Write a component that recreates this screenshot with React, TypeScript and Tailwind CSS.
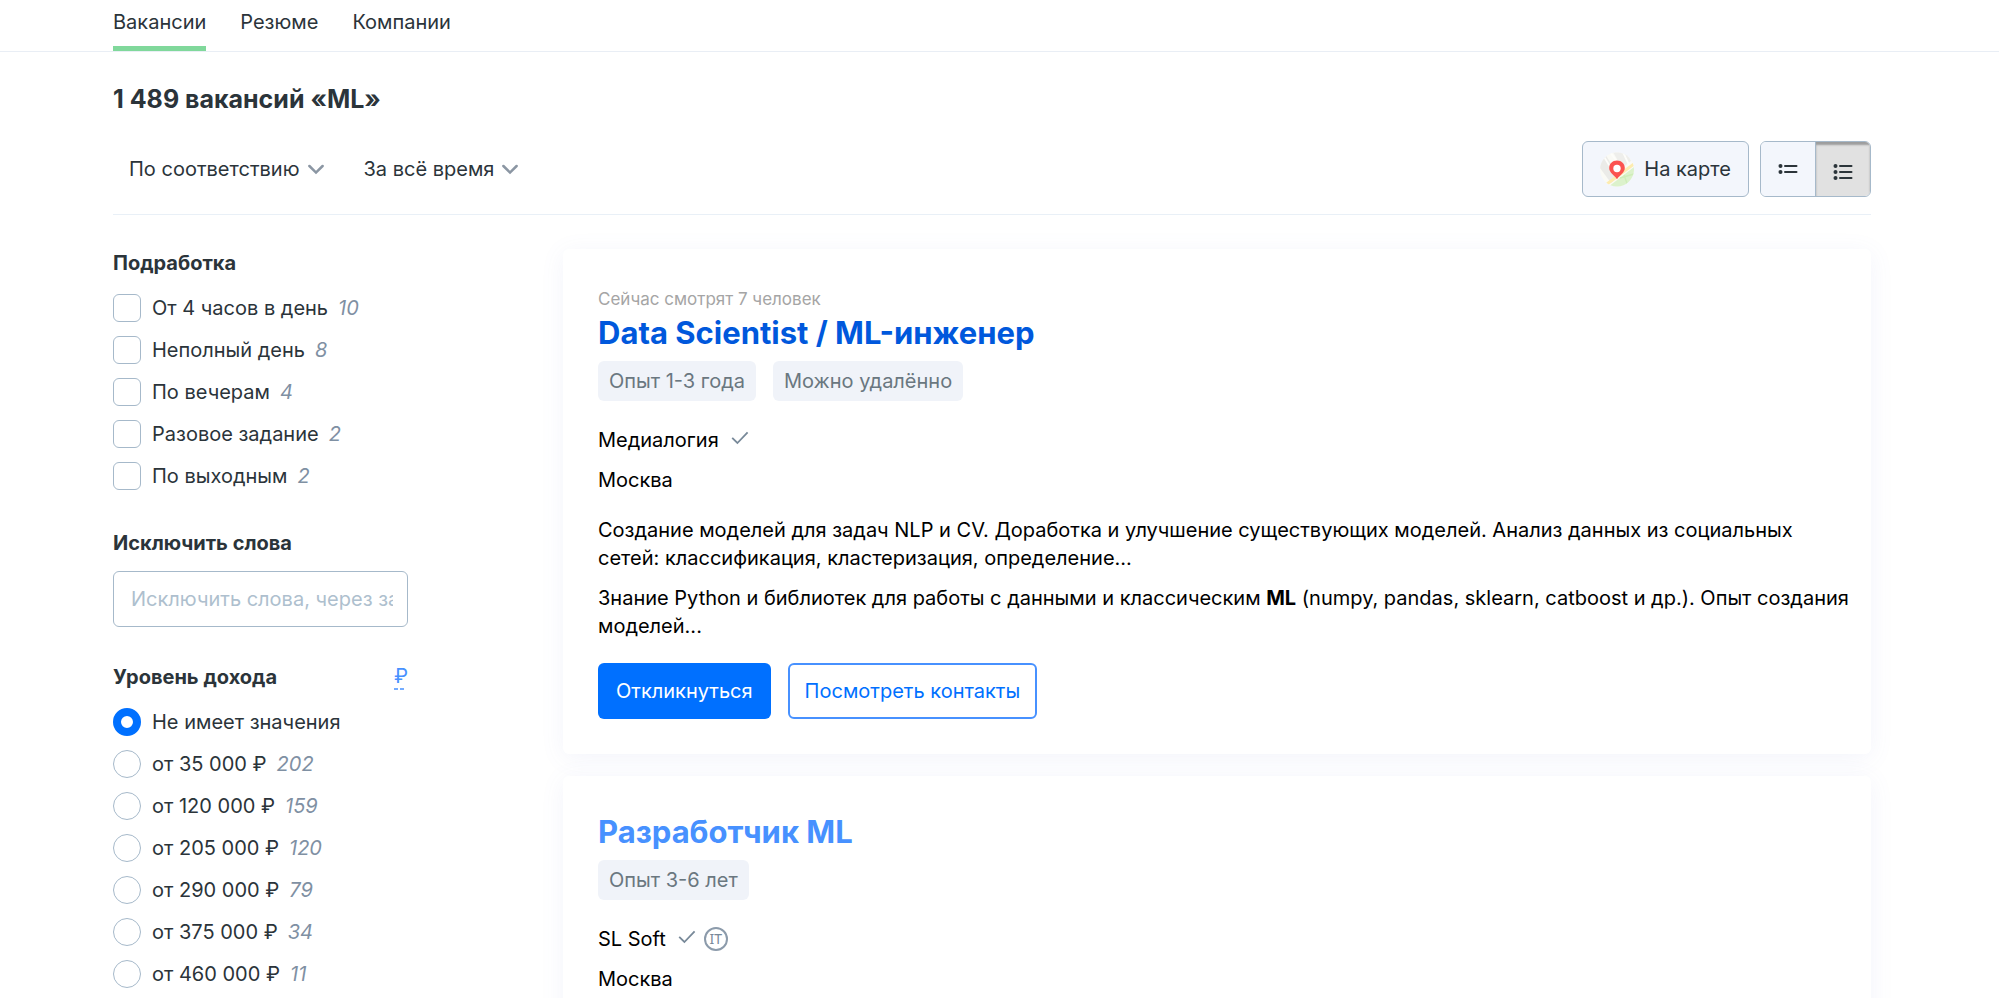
import React from "react";

type Option = { label: string; count?: number };

const schedule: Option[] = [
  { label: "От 4 часов в день", count: 10 },
  { label: "Неполный день", count: 8 },
  { label: "По вечерам", count: 4 },
  { label: "Разовое задание", count: 2 },
  { label: "По выходным", count: 2 },
];

const income: Option[] = [
  { label: "Не имеет значения" },
  { label: "от 35 000 ₽", count: 202 },
  { label: "от 120 000 ₽", count: 159 },
  { label: "от 205 000 ₽", count: 120 },
  { label: "от 290 000 ₽", count: 79 },
  { label: "от 375 000 ₽", count: 34 },
  { label: "от 460 000 ₽", count: 11 },
];

function Chevron() {
  return (
    <svg width="16" height="12" viewBox="0 0 16 12" fill="none" aria-hidden="true">
      <path d="M1.4 3L8 9.6L14.6 3" stroke="#8b96a3" strokeWidth="2.5" strokeLinecap="round" />
    </svg>
  );
}

function Check() {
  return (
    <svg width="18" height="14" viewBox="0 0 18 14" fill="none" className="mb-1" aria-hidden="true">
      <path d="M1.2 6.8L6.4 12L16.6 1.4" stroke="#788999" strokeWidth="1.8" />
    </svg>
  );
}

function MapIcon() {
  return (
    <svg width="34" height="35" viewBox="0 0 34 35" aria-hidden="true">
      <defs>
        <clipPath id="disc">
          <circle cx="17" cy="17.5" r="17" />
        </clipPath>
      </defs>
      <g clipPath="url(#disc)">
        <rect width="34" height="35" fill="#fafaf5" />
        <path d="M0 7L5 2L19 24L11 31L0 16Z" fill="#ebebe8" />
        <path d="M13 0H27L31 9L22 16Z" fill="#eeeeeb" />
        <path d="M3 3L20 31M10 0L23 18M23 0L29 13" stroke="#fdfdfa" strokeWidth="1.8" />
        <path d="M8 35L34 15V35Z" fill="#dcf2cc" />
        <path d="M20 26L34 22M24 23L28 34" stroke="#cfedb9" strokeWidth="1.4" />
        <path d="M7 32L34 12" stroke="#fdecb0" strokeWidth="3" />
      </g>
      <path
        d="M17 8.5C12.5 8.5 9.2 11.8 9.2 16.1C9.2 20.7 14 23 17 27.2C20 23 24.8 20.7 24.8 16.1C24.8 11.8 21.5 8.5 17 8.5Z"
        fill="#fb524f"
      />
      <circle cx="17" cy="16.5" r="3.7" fill="#fff" />
    </svg>
  );
}

function ListIcon({ rows }: { rows: number[] }) {
  return (
    <svg width="20" height="17" viewBox="0 0 20 17" aria-hidden="true">
      {rows.map((y) => (
        <g key={y}>
          <circle cx="2.5" cy={y} r="2" fill="#2b343a" />
          <path d={`M7 ${y}H18.5`} stroke="#2b343a" strokeWidth="2" strokeLinecap="round" />
        </g>
      ))}
    </svg>
  );
}

function OptionList({ type, options }: { type: "checkbox" | "radio"; options: Option[] }) {
  return (
    <div className="mt-2.5">
      {options.map((o, i) => (
        <label key={o.label} className="flex h-[42px] items-center">
          <input
            type={type}
            name={type === "radio" ? "income" : undefined}
            defaultChecked={type === "radio" && i === 0}
            className={
              type === "radio"
                ? "size-7 shrink-0 appearance-none rounded-full border border-[#a6b9ca] bg-white checked:border-8 checked:border-[#0070ff]"
                : "size-7 shrink-0 appearance-none rounded-md border border-[#a6b9ca] bg-white checked:bg-[#0070ff]"
            }
          />
          <span className="ml-[11px]">{o.label}</span>
          {o.count !== undefined && <i className="ml-2.5 text-[#7f90a3]">{o.count}</i>}
        </label>
      ))}
    </div>
  );
}

function Tag({ children }: { children: React.ReactNode }) {
  return (
    <li className="flex h-10 items-center rounded-md bg-[#f0f3f9] px-[11px] text-[#6a7780]">{children}</li>
  );
}

const card = "rounded-md bg-white pt-9 pr-5 pb-[35px] pl-[35px] text-black shadow-[0_4px_24px_rgba(100,120,200,0.08)]";

export default function App() {
  return (
    <div className="h-screen overflow-hidden bg-white font-['Inter','Liberation_Sans',sans-serif] text-xl leading-7 text-[#2b343a]">
      <nav className="flex gap-[34px] border-b border-[#e9eef5] pr-32 pl-[113px]">
        <a href="#vacancies" className="border-b-5 border-[#80d89b] pt-2 pb-2.5">Вакансии</a>
        <a href="#resumes" className="pt-2">Резюме</a>
        <a href="#companies" className="pt-2">Компании</a>
      </nav>

      <main className="pr-32 pl-[113px]">
        <h1 className="mt-[31px] text-[25px] leading-8 font-bold">1 489 вакансий «ML»</h1>

        <div className="mt-[26px] flex items-center border-b border-[#e9f0f7] pb-[17px]">
          <button type="button" className="ml-4 flex items-center gap-2">
            По соответствию
            <Chevron />
          </button>
          <button type="button" className="ml-10 flex items-center gap-2">
            За всё время
            <Chevron />
          </button>
          <button
            type="button"
            className="ml-auto flex h-14 items-center gap-2.5 rounded-md border border-[#a6b9ca] bg-[#f3f6fc] px-[17px]"
          >
            <MapIcon />
            На карте
          </button>
          <div className="ml-[11px] flex h-14 overflow-hidden rounded-md border border-[#a6b9ca]">
            <button
              type="button"
              aria-label="Кратко"
              className="flex w-[55px] items-center justify-center border-r border-[#a6b9ca] bg-[#f3f6fc]"
            >
              <ListIcon rows={[5, 11]} />
            </button>
            <button
              type="button"
              aria-label="Подробно"
              aria-pressed="true"
              className="flex w-[54px] items-center justify-center bg-[#e1e1e1] pt-1 shadow-[inset_0_3px_2px_rgba(0,0,0,0.3)]"
            >
              <ListIcon rows={[3, 9, 15]} />
            </button>
          </div>
        </div>

        <div className="mt-[34px] flex items-start gap-[155px]">
          <aside className="w-[295px] shrink-0">
            <h2 className="font-bold">Подработка</h2>
            <OptionList type="checkbox" options={schedule} />

            <label htmlFor="exclude" className="mt-8 block font-bold">Исключить слова</label>
            <input
              id="exclude"
              type="text"
              placeholder="Исключить слова, через запятую"
              className="mt-3.5 block h-14 w-full rounded-md border border-[#a6b9ca] pr-3.5 pl-[17px] placeholder:text-[#aebfce]"
            />

            <div className="mt-9 flex items-center justify-between">
              <h2 className="font-bold">Уровень дохода</h2>
              <button type="button" className="flex flex-col items-start leading-6 text-[#4791ff]">
                ₽
                <svg width="11" height="2" viewBox="0 0 11 2" aria-hidden="true">
                  <path d="M0 1H10" stroke="currentColor" strokeWidth="1.5" strokeDasharray="4 2" />
                </svg>
              </button>
            </div>
            <OptionList type="radio" options={income} />
          </aside>

          <section className="flex min-w-0 flex-1 flex-col gap-[22px]">
            <article className={card}>
              <p className="text-[17px] text-[#a5a5a5]">Сейчас смотрят 7 человек</p>
              <h2 className="text-[31px] leading-10 font-bold text-[#0058dc]">
                <a href="#data-scientist">Data Scientist / ML-инженер</a>
              </h2>
              <ul className="mt-2 flex gap-[17px]">
                <Tag>Опыт 1-3 года</Tag>
                <Tag>Можно удалённо</Tag>
              </ul>
              <p className="mt-[25px] flex items-center gap-3">
                Медиалогия
                <Check />
              </p>
              <p className="mt-3">Москва</p>
              <p className="mt-[22px]">
                Создание моделей для задач NLP и CV. Доработка и улучшение существующих моделей. Анализ данных из
                социальных сетей: классификация, кластеризация, определение...
              </p>
              <p className="mt-3">
                Знание Python и библиотек для работы с данными и классическим <b>ML</b> (numpy, pandas, sklearn,
                catboost и др.). Опыт создания моделей...
              </p>
              <div className="mt-[23px] flex gap-[17px]">
                <button type="button" className="h-14 rounded-md bg-[#0070ff] px-[18px] text-white">
                  Откликнуться
                </button>
                <button
                  type="button"
                  className="h-14 rounded-md border-2 border-[#4791ff] bg-white px-[15px] text-[#0070ff]"
                >
                  Посмотреть контакты
                </button>
              </div>
            </article>

            <article className={card}>
              <h2 className="text-[31px] leading-10 font-bold text-[#4791ff]">
                <a href="#ml-developer">Разработчик ML</a>
              </h2>
              <ul className="mt-2 flex gap-[17px]">
                <Tag>Опыт 3-6 лет</Tag>
              </ul>
              <div className="mt-[25px] flex items-center gap-3">
                SL Soft
                <span className="flex items-center gap-2">
                  <Check />
                  <span className="flex size-6 items-center justify-center rounded-full border-2 border-[#8c9bab] font-['Noto_Sans',sans-serif] text-sm text-[#788999]">
                    IT
                  </span>
                </span>
              </div>
              <p className="mt-3">Москва</p>
            </article>
          </section>
        </div>
      </main>
    </div>
  );
}
